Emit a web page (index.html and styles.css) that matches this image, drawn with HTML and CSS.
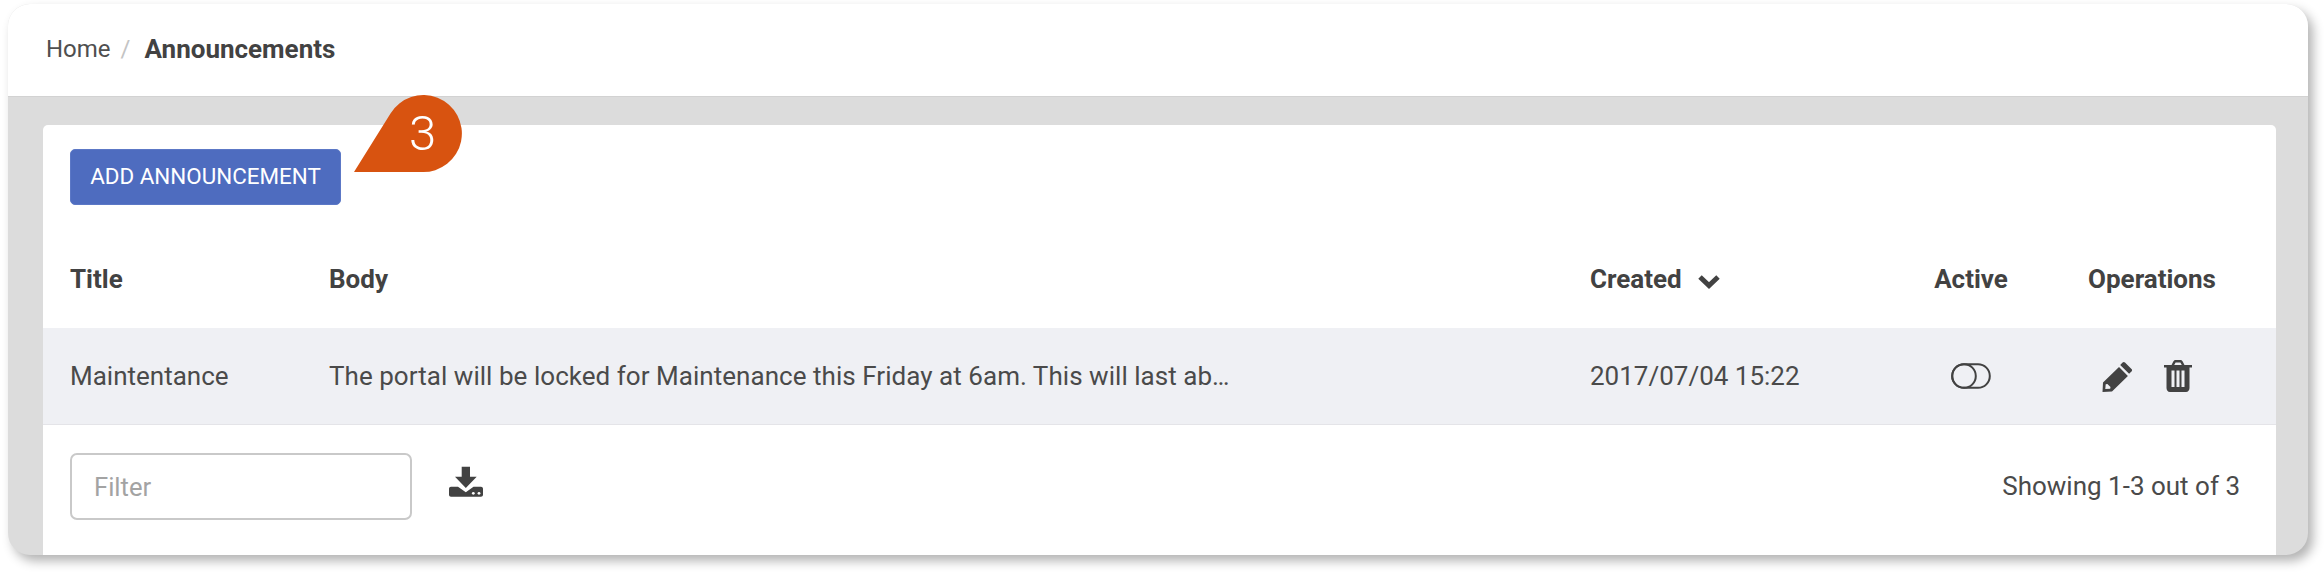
FILE: index.html
```html
<!DOCTYPE html>
<html lang="en">
<head>
<meta charset="utf-8">
<title>Announcements</title>
<link rel="stylesheet" href="styles.css">
</head>
<body>
<div class="panel">
  <nav class="crumbs"><span class="home">Home</span><span class="sep">/</span><strong class="current">Announcements</strong></nav>
  <main class="content">
    <section class="card">
      <div class="toolbar"><button class="add">ADD ANNOUNCEMENT</button></div>
      <div class="row head">
        <div>Title</div>
        <div>Body</div>
        <div class="created">Created
          <svg class="chev" viewBox="0 0 24 16" width="24" height="16"><path d="M3 4l9 8.5L21 4" fill="none" stroke="#424242" stroke-width="5"/></svg>
        </div>
        <div class="center">Active</div>
        <div class="center">Operations</div>
      </div>
      <div class="row item">
        <div>Maintentance</div>
        <div class="body-text">The portal will be locked for Maintenance this Friday at 6am. This will last ab…</div>
        <div>2017/07/04 15:22</div>
        <div class="center">
          <svg class="toggle" viewBox="0 0 40 26" width="40" height="26"><rect x="1.2" y="1.2" width="37.6" height="23.6" rx="11.8" fill="none" stroke="#424242" stroke-width="2"/><circle cx="13" cy="13" r="11.8" fill="none" stroke="#424242" stroke-width="2"/></svg>
        </div>
        <div class="center ops">
          <svg viewBox="0 0 32 32" width="32" height="32"><path fill="#424242" d="M24 2.500l6.500 6.500c.8.8.8 1.600 0 2.400l-2.400 2.400-8.900-8.900 2.400-2.400c.8-.8 1.600-.8 2.400 0zM18 7l8.900 8.900L11 31.500 1.500 32 2 22.500zM4.700 24.200l-.4 4.900 4.900-.4.300-1.700-3.100-3.100z"/></svg>
          <svg viewBox="0 0 30 32" width="30" height="32"><path fill="#424242" fill-rule="evenodd" d="M1 5h7.500l1.800-3.500C10.800.6 11.500 0 12.500 0h5c1 0 1.700.6 2.200 1.500L21.500 5H29v2.500h-2.500V28c0 2.200-1.300 4-3.500 4H7c-2.200 0-3.500-1.800-3.500-4V7.500H1zM11.200 5h7.600l-1.400-2.600h-4.800zM8.500 10.500V27h3V10.500zm5 0V27h3V10.500zm5 0V27h3V10.500z"/></svg>
        </div>
      </div>
      <div class="foot">
        <input class="filter" placeholder="Filter" aria-label="Filter">
        <svg class="dl" viewBox="0 0 34 32" width="34" height="32"><path fill="#424242" d="M12.700.7H21v10h6.700L16.800 22 6 10.700h6.700zM2 20.700h7l7.800 5.600 7.700-5.600H32c1.100 0 2 .9 2 2v6c0 1.100-.9 2-2 2H2c-1.100 0-2-.9-2-2v-6c0-1.100.9-2 2-2z"/><circle cx="24.300" cy="27.300" r="1.400" fill="#fff"/><circle cx="30" cy="27.300" r="1.400" fill="#fff"/></svg>
        <span class="count">Showing 1-3 out of 3</span>
      </div>
    </section>
  </main>
  <svg class="badge" viewBox="0 0 110 80" width="110" height="80"><path fill="#d85310" d="M1 77L37.500 18.500A38.500 38.500 0 1 1 69 77z"/><text x="69.500" y="55" text-anchor="middle" class="num">3</text></svg>
</div>
</body>
</html>
```

FILE: styles.css
```css
* { box-sizing: border-box; }
html, body { margin: 0; height: 575px; background: #fff; overflow: hidden; }
body { padding: 4px 16px 20px 8px; font-family: Roboto, "Liberation Sans", sans-serif; color: #424242; }
.panel {
  position: relative;
  height: 551px;
  background: #dcdcdc;
  border-radius: 22px;
  box-shadow: 5px 6px 11px rgba(0, 0, 0, .3);
  display: flex;
  flex-direction: column;
  overflow: visible;
}
.crumbs {
  height: 93px;
  flex: none;
  background: #fff;
  border-radius: 22px 22px 0 0;
  border-bottom: 1px solid #d2d2d2;
  display: flex;
  align-items: center;
  padding: 0 0 3px 38px;
  font-size: 24px;
}
.home { color: #4f4f4f; }
.sep { color: #c4c4c4; margin: 0 14px 0 10px; }
.current { font-weight: 700; color: #424242; font-size: 26px; }
.content { flex: 1; padding: 28px 32px 0 35px; min-height: 0; }
.card { height: 100%; background: #fff; border-radius: 5px 5px 0 0; display: flex; flex-direction: column; }
.toolbar { padding: 24px 0 0 27px; height: 101px; flex: none; }
.add {
  width: 271px; height: 56px;
  background: #4e6cbf;
  color: #fff;
  border: 1px solid #5c78c6;
  border-radius: 5px;
  font: 400 22.400px Roboto, sans-serif;
  padding: 0 0 2px;
}
.row {
  display: grid;
  grid-template-columns: 259px 1261px 300px 162px 200px;
  padding: 0 23px 0 27px;
  align-items: center;
  font-size: 26px;
}
.head { height: 102px; font-weight: 700; padding-top: 3px; color: #424242; }
.item { height: 97px; background: #eff0f4; border-bottom: 1px solid #e4e4e8; color: #4a4a4a; }
.body-text { white-space: nowrap; letter-spacing: .04px; }
.center { display: flex; justify-content: center; align-items: center; }
.created { display: flex; align-items: center; gap: 15px; }
.chev { margin-top: 5px; }
.ops { gap: 30px; position: relative; left: -5px; }
.toggle { display: block; }
.foot { flex: 1; display: flex; align-items: flex-start; padding: 28px 36px 0 27px; position: relative; }
.filter {
  width: 342px; height: 67px;
  border: 2px solid #c9c9c9;
  border-radius: 7px;
  padding: 0 22px;
  font: 400 25.600px Roboto, sans-serif;
  color: #424242;
  background: #fff;
  outline: none;
}
.filter::placeholder { color: #a3a3a3; opacity: 1; }
.dl { margin: 13px 0 0 37px; }
.count { margin-left: auto; margin-top: 18px; font-size: 26px; color: #4a4a4a; }
.badge { position: absolute; left: 345px; top: 91px; }
.num { font: 300 49px Roboto, sans-serif; fill: #fff; }
```
